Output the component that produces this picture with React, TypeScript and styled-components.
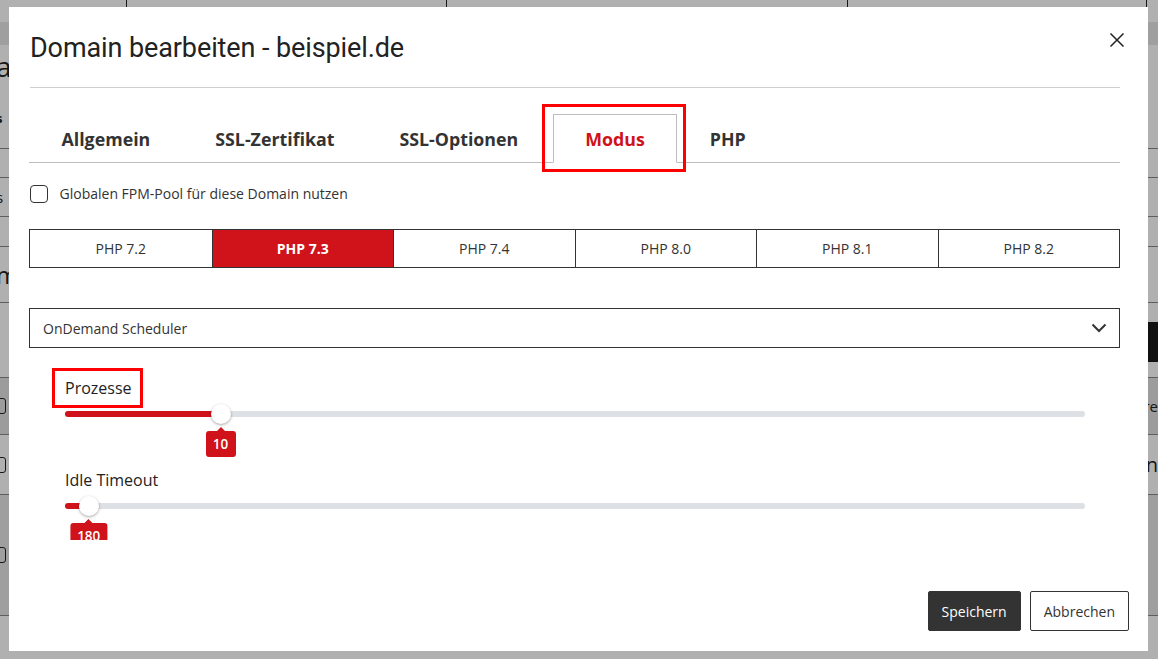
import React from "react";
import styled, { createGlobalStyle, css } from "styled-components";

const GlobalStyle = createGlobalStyle`
  html, body {
    margin: 0;
    padding: 0;
    width: 100%;
    height: 100%;
    overflow: hidden;
  }
  body {
    font-family: "Open Sans", "Noto Sans", "Liberation Sans", sans-serif;
    color: #333;
    background: #fff;
  }
  * { box-sizing: border-box; }
`;

const RED = "#d0121b";

/* ---------- page behind the dialog ---------- */

const BgPage = styled.div`
  width: 1158px;
  height: 659px;
  display: flex;
  flex-direction: column;
  background: #fff;
`;

const BgRow = styled.div<{ $h: number; $shade?: string; $line?: boolean }>`
  height: ${p => p.$h}px;
  flex-shrink: 0;
  display: flex;
  align-items: center;
  justify-content: space-between;
  background: ${p => p.$shade || "#fff"};
  border-bottom: ${p => (p.$line ? "1px solid #888" : "none")};
  font-size: 14px;
`;

const BgCols = styled.div`
  display: grid;
  grid-template-columns: 127px 320px 401px 299px 11px;
  width: 100%;
  height: 100%;
  & > div {
    border-right: 1px solid #222;
  }
`;

const BgText = styled.span<{ $size: number; $bold?: boolean }>`
  font-size: ${p => p.$size}px;
  font-weight: ${p => (p.$bold ? 700 : 400)};
  margin-left: -4px;
  color: #222;
`;

const BgDark = styled.div`
  width: 40px;
  height: 100%;
  background: #1a1a1a;
  color: #fff;
  font-size: 18px;
  padding-left: 8px;
  display: flex;
  align-items: center;
`;

const BgBox = styled.span`
  width: 14px;
  height: 16px;
  margin-left: -8px;
  border: 1px solid #222;
  border-radius: 3px;
`;

const Backdrop = styled.div`
  position: fixed;
  inset: 0;
  background: rgba(0, 0, 0, 0.31);
  display: flex;
  padding: 7px 10px 8px 9px;
`;

/* ---------- dialog ---------- */

const Dialog = styled.div`
  flex: 1;
  background: #fff;
  display: flex;
  flex-direction: column;
`;

const Header = styled.div`
  height: 81px;
  margin: 0 28px 0 21px;
  display: flex;
  align-items: center;
  justify-content: space-between;
  border-bottom: 1px solid #cfcfcf;
  flex-shrink: 0;
`;

const Title = styled.h1`
  margin: 2px 0 0 0;
  font-family: "Roboto", "Liberation Sans", sans-serif;
  font-weight: 400;
  font-size: 27px;
  letter-spacing: -0.1px;
  color: #222;
`;

const CloseButton = styled.button`
  border: 0;
  background: none;
  padding: 0;
  width: 16px;
  height: 16px;
  margin: 0 -5px 14px 0;
  cursor: pointer;
  display: flex;
`;

const Body = styled.div`
  height: 452px;
  overflow: hidden;
  padding: 0 28px 0 20px;
  flex-shrink: 0;
`;

const TabBar = styled.div`
  margin-top: 26px;
  display: flex;
  align-items: flex-end;
  border-bottom: 1px solid #bdbdbd;
`;

const Tab = styled.div<{ $active?: boolean }>`
  position: relative;
  height: 49px;
  padding: 0 31.5px;
  display: flex;
  align-items: center;
  font-size: 17.8px;
  font-weight: 700;
  color: #333;
  margin-bottom: -1px;
  border: 1px solid transparent;
  ${p =>
    p.$active &&
    css`
      margin-left: 2px;
      color: ${RED};
      border-color: #bdbdbd;
      border-bottom-color: #fff;
      background: #fff;
      &::after {
        content: "";
        position: absolute;
        left: -12px;
        right: -10px;
        top: -11px;
        bottom: -10px;
        border: 3px solid #f00;
      }
    `}
`;

const CheckRow = styled.label`
  margin-top: 21px;
  display: flex;
  align-items: center;
  gap: 12px;
  font-size: 14px;
  color: #333;
`;

const CheckBox = styled.span`
  width: 18px;
  height: 18px;
  border: 1.5px solid #333;
  border-radius: 4px;
  margin-left: 0.5px;
`;

const Segments = styled.div`
  margin-top: 26px;
  display: grid;
  grid-template-columns: repeat(6, 1fr);
  border: 1px solid #333;
  height: 39px;
`;

const Segment = styled.div<{ $active?: boolean }>`
  display: flex;
  align-items: center;
  justify-content: center;
  font-size: 14px;
  border-left: 1px solid #333;
  &:first-child { border-left: 0; }
  ${p =>
    p.$active
      ? css`
          background: ${RED};
          color: #fff;
          font-weight: 700;
        `
      : css`
          color: #333;
        `}
`;

const Select = styled.div`
  margin-top: 40px;
  height: 40px;
  border: 1px solid #333;
  display: flex;
  align-items: center;
  justify-content: space-between;
  padding: 0 12px 0 13px;
  font-size: 14px;
  color: #333;
`;

const SliderBlock = styled.div`
  padding: 0 35px 0 36px;
`;

const SliderLabel = styled.div<{ $top: number }>`
  margin-top: ${p => p.$top}px;
  font-size: 16px;
  color: #222;
  line-height: 22px;
`;

const Marked = styled.span`
  position: relative;
  &::after {
    content: "";
    position: absolute;
    left: -13px;
    right: -11px;
    top: -9px;
    bottom: -9px;
    border: 3px solid #f00;
  }
`;

const Track = styled.div`
  position: relative;
  margin-top: 12px;
  height: 6px;
  border-radius: 3px;
  background: #dde0e4;
`;

const Fill = styled.div`
  height: 100%;
  border-radius: 3px;
  background: ${RED};
`;

const Thumb = styled.div`
  position: absolute;
  top: 50%;
  width: 20px;
  height: 20px;
  margin: -10px 0 0 -10px;
  border-radius: 50%;
  background: #fff;
  box-shadow: 0 1px 3px rgba(0, 0, 0, 0.35);
`;

const Bubble = styled.div`
  position: absolute;
  top: 20px;
  transform: translateX(-50%);
  min-width: 30px;
  height: 26px;
  padding: 0 7px;
  border-radius: 3px;
  background: ${RED};
  color: #fff;
  font-size: 13.5px;
  font-weight: 600;
  display: flex;
  align-items: center;
  justify-content: center;
  &::before {
    content: "";
    position: absolute;
    top: -4px;
    left: 50%;
    margin-left: -4px;
    border-left: 4px solid transparent;
    border-right: 4px solid transparent;
    border-bottom: 4px solid ${RED};
  }
`;

const Footer = styled.div`
  flex: 1;
  display: flex;
  justify-content: flex-end;
  align-items: flex-end;
  gap: 9px;
  padding: 0 19px 20px 0;
`;

const Button = styled.button<{ $primary?: boolean }>`
  height: 40px;
  padding: 0 13px;
  font-family: "Open Sans", "Noto Sans", sans-serif;
  font-size: 14px;
  border: 1px solid #333;
  border-radius: 2px;
  cursor: pointer;
  ${p =>
    p.$primary
      ? css`
          background: #333;
          color: #fff;
        `
      : css`
          background: #fff;
          color: #333;
        `}
`;

type SliderProps = {
  label: React.ReactNode;
  value: number;
  min: number;
  max: number;
  top: number;
};

const Slider = ({ label, value, min, max, top }: SliderProps) => {
  const pct = ((value - min) / (max - min)) * 100;
  return (
    <>
      <SliderLabel $top={top}>{label}</SliderLabel>
      <Track>
        <Fill style={{ width: `${pct}%` }} />
        <Thumb style={{ left: `${pct}%` }} />
        <Bubble style={{ left: `${pct}%` }}>{value}</Bubble>
      </Track>
    </>
  );
};

const tabs = ["Allgemein", "SSL-Zertifikat", "SSL-Optionen", "Modus", "PHP"];
const versions = ["PHP 7.2", "PHP 7.3", "PHP 7.4", "PHP 8.0", "PHP 8.1", "PHP 8.2"];

export default function App() {
  return (
    <>
      <GlobalStyle />
      <BgPage>
        <BgRow $h={22}>
          <BgCols>
            <div />
            <div />
            <div />
            <div />
          </BgCols>
        </BgRow>
        <BgRow $h={23} $shade="#e6e6e6" />
        <BgRow $h={42}>
          <BgText $size={28}>a</BgText>
        </BgRow>
        <BgRow $h={62} $line>
          <BgText $size={13} $bold>
            s
          </BgText>
        </BgRow>
        <BgRow $h={29} $line />
        <BgRow $h={39} $line>
          <BgText $size={15}>s</BgText>
        </BgRow>
        <BgRow $h={30} $line />
        <BgRow $h={56} $line>
          <BgText $size={24}>m</BgText>
        </BgRow>
        <BgRow $h={19} />
        <BgRow $h={40}>
          <span />
          <BgDark>(</BgDark>
        </BgRow>
        <BgRow $h={16} $line />
        <BgRow $h={57} $shade="#e2e2e2" $line>
          <BgBox />
          <BgText $size={15}>re</BgText>
        </BgRow>
        <BgRow $h={60} $line>
          <BgBox />
          <BgText $size={20}>n</BgText>
        </BgRow>
        <BgRow $h={121} $shade="#e6e6e6" $line>
          <BgBox />
        </BgRow>
        <BgRow $h={43} />
      </BgPage>

      <Backdrop>
        <Dialog>
          <Header>
            <Title>Domain bearbeiten - beispiel.de</Title>
            <CloseButton aria-label="Schließen">
              <svg width="16" height="16" viewBox="0 0 16 16">
                <path d="M1.5 1.5 L14.5 14.5 M14.5 1.5 L1.5 14.5" stroke="#222" strokeWidth="1.5" fill="none" />
              </svg>
            </CloseButton>
          </Header>

          <Body>
            <TabBar>
              {tabs.map(t => (
                <Tab key={t} $active={t === "Modus"}>
                  {t}
                </Tab>
              ))}
            </TabBar>

            <CheckRow>
              <CheckBox />
              Globalen FPM-Pool für diese Domain nutzen
            </CheckRow>

            <Segments>
              {versions.map(v => (
                <Segment key={v} $active={v === "PHP 7.3"}>
                  {v}
                </Segment>
              ))}
            </Segments>

            <Select>
              OnDemand Scheduler
              <svg width="16" height="10" viewBox="0 0 16 10">
                <path d="M1.5 1.5 L8 8 L14.5 1.5" stroke="#333" strokeWidth="2" fill="none" />
              </svg>
            </Select>

            <SliderBlock>
              <Slider label={<Marked>Prozesse</Marked>} value={10} min={1} max={60} top={29} />
              <Slider label="Idle Timeout" value={180} min={120} max={2700} top={52} />
            </SliderBlock>
          </Body>

          <Footer>
            <Button $primary>Speichern</Button>
            <Button>Abbrechen</Button>
          </Footer>
        </Dialog>
      </Backdrop>
    </>
  );
}
